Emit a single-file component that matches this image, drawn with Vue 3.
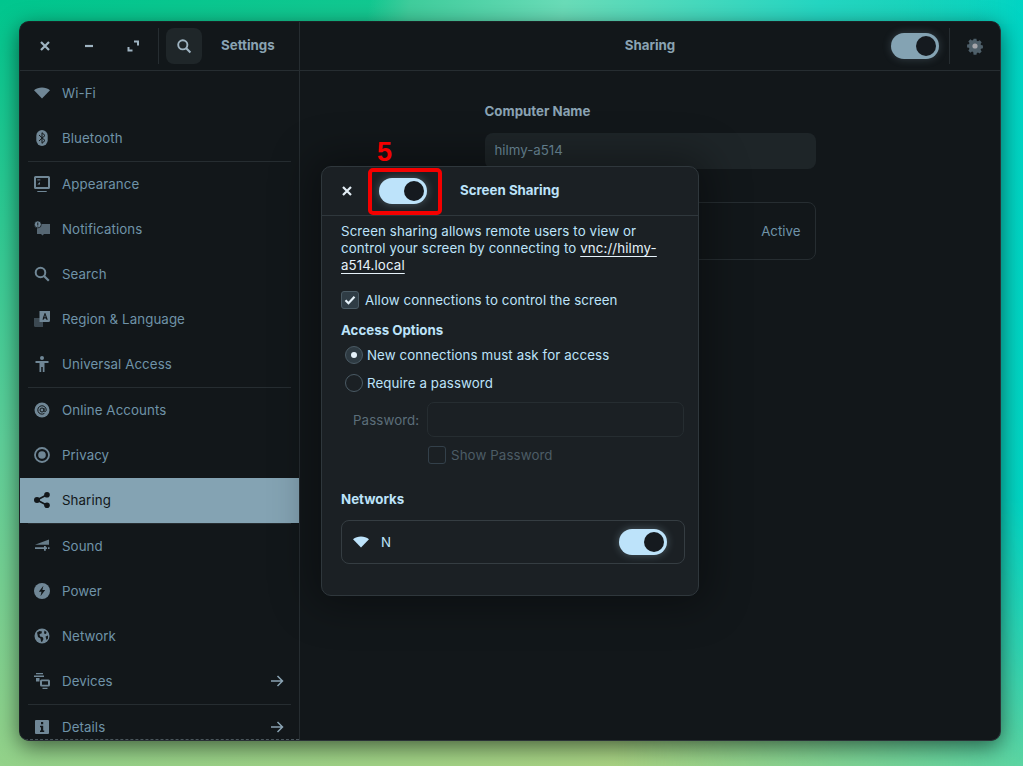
<script setup>
const groups = [
  [
    { label: 'Wi-Fi', icon: 'wifi' },
    { label: 'Bluetooth', icon: 'bluetooth' },
  ],
  [
    { label: 'Appearance', icon: 'appearance' },
    { label: 'Notifications', icon: 'notifications' },
    { label: 'Search', icon: 'search' },
    { label: 'Region & Language', icon: 'region' },
    { label: 'Universal Access', icon: 'access' },
  ],
  [
    { label: 'Online Accounts', icon: 'online' },
    { label: 'Privacy', icon: 'privacy' },
    { label: 'Sharing', icon: 'sharing', active: true },
  ],
  [
    { label: 'Sound', icon: 'sound' },
    { label: 'Power', icon: 'power' },
    { label: 'Network', icon: 'network' },
    { label: 'Devices', icon: 'devices', arrow: true },
  ],
  [{ label: 'Details', icon: 'details', arrow: true }],
]
</script>

<template>
  <div class="desktop">
    <div class="window">
      <header class="titlebar">
        <div class="title-left">
          <div class="win-buttons">
            <svg class="tb-icon" viewBox="0 0 16 16"><path d="M4 4l8 8M12 4l-8 8" stroke="currentColor" stroke-width="2.2" /></svg>
            <svg class="tb-icon" viewBox="0 0 16 16"><path d="M4 8h8" stroke="currentColor" stroke-width="2.2" /></svg>
            <svg class="tb-icon" viewBox="0 0 16 16"><path d="M9 3.5h4v4M3.5 9v3.5h4" fill="none" stroke="currentColor" stroke-width="2" /></svg>
          </div>
          <div class="vsep"></div>
          <button class="search-btn">
            <svg width="16" height="16" viewBox="0 0 16 16"><circle cx="6.8" cy="6.8" r="4.6" fill="none" stroke="currentColor" stroke-width="1.9" /><path d="M10.2 10.2L14.4 14.4" stroke="currentColor" stroke-width="2.1" /></svg>
          </button>
          <span class="app-title">Settings</span>
        </div>
        <div class="title-right">
          <span class="page-title">Sharing</span>
          <div class="title-tools">
            <div class="switch switch-muted"><span class="knob"></span></div>
            <div class="vsep"></div>
            <svg class="gear" width="18" height="18" viewBox="0 0 18 18">
              <path fill="#4e5f69" d="M7.4 1h3.2l.4 2.2 1.3.6 1.9-1.2 2.2 2.3-1.2 1.8.5 1.3 2.1.4v3.2l-2.1.4-.5 1.3 1.2 1.8-2.2 2.3-1.9-1.2-1.3.6-.4 1.9H7.4L7 15.8l-1.3-.6-1.9 1.2-2.2-2.3 1.2-1.8-.5-1.3L.2 10.6V7.4l2.1-.4.5-1.3-1.2-1.8 2.2-2.3 1.9 1.2L7 2.2z" transform="translate(0.9 0.9) scale(0.9)" />
              <circle cx="9" cy="9" r="2.6" fill="#a6a6aa" />
            </svg>
          </div>
        </div>
      </header>

      <div class="body">
        <aside class="sidebar">
          <div v-for="(group, g) in groups" :key="g" class="group">
            <div v-for="item in group" :key="item.label" class="row" :class="{ active: item.active }">
              <svg class="row-icon" width="16" height="16" viewBox="0 0 16 16" fill="currentColor">
                <path v-if="item.icon === 'wifi'" d="M0 5.2C2.2 3.4 5 2.4 8 2.4s5.800 1 8 2.800L8 13.600z" />
                <g v-else-if="item.icon === 'bluetooth'">
                  <rect x="2.300" y="0" width="11.400" height="16" rx="5.700" />
                  <path d="M5 5l6 5.500-3 2.800V2.700l3 2.800L5 11" fill="none" stroke="#121719" stroke-width="1" />
                </g>
                <g v-else-if="item.icon === 'appearance'">
                  <path fill-rule="evenodd" d="M1.500 0h13A1.500 1.500 0 0 1 16 1.500v10a1.500 1.500 0 0 1-1.500 1.500h-13A1.500 1.500 0 0 1 0 11.500v-10A1.500 1.500 0 0 1 1.500 0zM2 2v9h12V2z" />
                  <path d="M3.300 15h9.400v1.200H3.300zM3.300 8.500L6 6v2.500z" />
                  <rect x="3.300" y="3.400" width="3" height="1" />
                </g>
                <g v-else-if="item.icon === 'notifications'">
                  <path d="M3 3h13v10h-6l-1.500 1.500L7 13H3z" opacity="0.72" />
                  <circle cx="3.800" cy="3.400" r="3.500" stroke="#121719" stroke-width="0.800" />
                  <path d="M3.300 1.400h1v2.600h-1zM3.300 4.600h1v1h-1z" fill="#121719" />
                </g>
                <g v-else-if="item.icon === 'search'">
                  <circle cx="6.500" cy="6.500" r="4.800" fill="none" stroke="currentColor" stroke-width="2" />
                  <path d="M10 10l4.800 4.800" stroke="currentColor" stroke-width="2.200" />
                </g>
                <g v-else-if="item.icon === 'region'">
                  <path d="M0 7h9v9H1.500A1.500 1.500 0 0 1 0 14.500z" opacity="0.45" />
                  <path fill-rule="evenodd" d="M5.500 0H16v9.500a1.500 1.500 0 0 1-1.500 1.500H5.500zM10.700 2L8.200 8.800h1.400l.5-1.400h1.800l.5 1.400h1.400L11.300 2zM11 3.800l.6 2.400h-1.200z" />
                </g>
                <g v-else-if="item.icon === 'access'">
                  <circle cx="8" cy="2" r="2" />
                  <path d="M1.500 5h13v2H10.500v9H8.800v-5H7.200v5H5.500V7H1.500z" />
                </g>
                <g v-else-if="item.icon === 'online'">
                  <circle cx="8" cy="8" r="7.500" />
                  <circle cx="8" cy="8" r="2" fill="none" stroke="#121719" stroke-width="1" />
                  <path d="M10 6v2.800c0 1.400 2.200 1.200 2.200-.8a4.200 4.200 0 1 0-1.800 3.400" fill="none" stroke="#121719" stroke-width="1" />
                </g>
                <g v-else-if="item.icon === 'privacy'">
                  <circle cx="8" cy="8" r="7" fill="none" stroke="currentColor" stroke-width="1.800" />
                  <circle cx="8" cy="8" r="3.800" />
                </g>
                <g v-else-if="item.icon === 'sharing'">
                  <circle cx="13" cy="2.800" r="2.800" />
                  <circle cx="13" cy="13.200" r="2.800" />
                  <circle cx="3" cy="8" r="3" />
                  <path d="M3 8l10-5.200M3 8l10 5.200" stroke="currentColor" stroke-width="1.800" />
                </g>
                <g v-else-if="item.icon === 'sound'">
                  <path d="M1 6.800L15 1.500v5.300z" opacity="0.9" />
                  <path d="M1 9.300h9V8h1.800v1.300H13v1.700h-1.200v1.700H10V11H1zM14 9.300h1.500V11H14z" />
                </g>
                <g v-else-if="item.icon === 'power'">
                  <circle cx="8" cy="8" r="8" />
                  <path d="M9.400 2.800L4.800 8.800h2.700l-1 4.400 4.700-6.200H8.400z" fill="#121719" />
                </g>
                <g v-else-if="item.icon === 'network'">
                  <circle cx="8" cy="8" r="7.500" />
                  <path d="M3 4.500l2.500-1.500 2.500.5-.5 2-2 .5.500 2.500 2.500.5 1 2-1.500 3-1-.5-.5-3-2.500-1.500zM10.500 2.500l2 1.500-.5 2-2-.5zM11.500 8.500l2.500-1v3l-1.500 1.500z" fill="#121719" />
                </g>
                <g v-else-if="item.icon === 'devices'">
                  <path d="M2 0h7v1.200H2zM0 2.500h10v1.600H0zM2 5h3.500v3.500H2z" />
                  <path fill-rule="evenodd" d="M7.500 6.500h7a1.500 1.500 0 0 1 1.500 1.500v4a1.500 1.500 0 0 1-1.500 1.500h-7A1.500 1.500 0 0 1 6 12V8a1.500 1.500 0 0 1 1.500-1.500zM8 8.300v3.400h6V8.300z" />
                  <path d="M8.500 14.800h5V16h-5z" />
                </g>
                <g v-else-if="item.icon === 'details'">
                  <path fill-rule="evenodd" d="M2 1h12a1 1 0 0 1 1 1v12a1 1 0 0 1-1 1H2a1 1 0 0 1-1-1V2a1 1 0 0 1 1-1zM7 3v2.200h2.200V3zM6 6.800v1.400h1v3.300H6V13h4.200v-1.500h-1V6.800z" />
                </g>
              </svg>
              <span class="row-label">{{ item.label }}</span>
              <svg v-if="item.arrow" class="row-arrow" width="14" height="14" viewBox="0 0 14 14"><path d="M1 7h11M7.500 2l5 5-5 5" fill="none" stroke="currentColor" stroke-width="1.500" /></svg>
            </div>
          </div>
          <div class="scroll-edge"></div>
        </aside>

        <main class="content">
          <div class="form">
            <div class="form-title">Computer Name</div>
            <div class="name-entry">hilmy-a514</div>
            <div class="active-card"><span>Active</span></div>
          </div>
        </main>
      </div>

      <section class="dialog">
        <div class="step">5</div>
        <header class="dialog-head">
          <svg class="dialog-close" viewBox="0 0 16 16"><path d="M4 4l8 8M12 4l-8 8" stroke="currentColor" stroke-width="2.200" /></svg>
          <div class="marked">
            <div class="switch"><span class="knob"></span></div>
          </div>
          <span class="dialog-title">Screen Sharing</span>
        </header>
        <div class="dialog-body">
          <p class="intro">Screen sharing allows remote users to view or<br />control your screen by connecting to <a class="link">vnc://hilmy-</a><br /><a class="link">a514.local</a></p>
          <label class="check-row">
            <span class="check">
              <svg width="12" height="12" viewBox="0 0 12 12"><path d="M1.500 6.200l3 3 6-6.400" fill="none" stroke="#e6f2fa" stroke-width="2.200" /></svg>
            </span>
            Allow connections to control the screen
          </label>
          <div class="section-title access-title">Access Options</div>
          <div class="options">
            <label class="radio-row"><span class="radio on"></span>New connections must ask for access</label>
            <label class="radio-row"><span class="radio"></span>Require a password</label>
          </div>
          <div class="password-row">
            <span class="password-label">Password:</span>
            <div class="password-entry"></div>
          </div>
          <label class="show-row"><span class="check check-off"></span>Show Password</label>
          <div class="section-title net-title">Networks</div>
          <div class="net-card">
            <svg width="16" height="16" viewBox="0 0 16 16" fill="currentColor"><path d="M0 5.200C2.200 3.400 5 2.400 8 2.400s5.800 1 8 2.800L8 13.600z" /></svg>
            <span class="net-name">N</span>
            <div class="switch"><span class="knob"></span></div>
          </div>
        </div>
      </section>
    </div>
  </div>
</template>

<style>
html, body { margin: 0; height: 100%; overflow: hidden; }
</style>

<style scoped>
.desktop {
  width: 1023px;
  height: 766px;
  padding: 21px 22px 25px 19px;
  box-sizing: border-box;
  font-family: Inter, "Noto Sans", sans-serif;
  font-size: 13.3px;
  background: linear-gradient(168deg, #00c68e 0%, #5fd09a 45%, #b8d47f 100%);
  position: relative;
  overflow: hidden;
}
.desktop::before {
  content: "";
  position: absolute;
  inset: 0;
  background: linear-gradient(to right, transparent 60%, #00d4c4 100%);
  -webkit-mask-image: linear-gradient(to bottom, #000 65%, rgba(0, 0, 0, 0.5) 100%);
  mask-image: linear-gradient(to bottom, #000 65%, rgba(0, 0, 0, 0.5) 100%);
}
.desktop::after {
  content: "";
  position: absolute;
  left: 0;
  right: 0;
  top: 0;
  height: 24px;
  background: linear-gradient(100deg, transparent 36%, #40cd9c 40%, #6adcb8 55%, #24d6c2 80%, transparent 100%);
}
.window {
  position: relative;
  z-index: 1;
  height: 720px;
  box-sizing: border-box;
  display: flex;
  flex-direction: column;
  background: #12171a;
  border-radius: 10px;
  border: 1px solid #2a3236;
  border-left-color: #1b2124;
  border-top-color: #1b2124;
  box-shadow: 0 6px 22px rgba(0, 0, 0, 0.55);
  color: #6f93a8;
}
.titlebar {
  display: flex;
  height: 48px;
  flex: none;
  border-bottom: 1px solid #262d31;
}
.title-left {
  width: 280px;
  flex: none;
  display: flex;
  align-items: center;
  box-sizing: border-box;
  border-right: 1px solid #262d31;
}
.win-buttons {
  display: flex;
  gap: 28px;
  padding-left: 17px;
  color: #9fb4c2;
}
.tb-icon {
  width: 16px;
  height: 16px;
}
.vsep {
  width: 1px;
  height: 36px;
  background: #262d31;
}
.win-buttons + .vsep {
  margin-left: 17px;
}
.search-btn {
  width: 36px;
  height: 36px;
  margin-left: 7px;
  border: none;
  padding: 0;
  border-radius: 8px;
  background: #1f2629;
  color: #9fb4c2;
  display: flex;
  align-items: center;
  justify-content: center;
}
.app-title {
  margin-left: 19px;
  margin-bottom: 2px;
  font-weight: 700;
  color: #8aa3b3;
}
.title-right {
  flex: 1;
  position: relative;
  display: flex;
  align-items: center;
  justify-content: center;
}
.page-title {
  margin-bottom: 2px;
  font-weight: 700;
  color: #8aa3b3;
}
.title-tools {
  position: absolute;
  right: 0;
  top: 6px;
  display: flex;
  align-items: center;
  gap: 9px;
}
.switch-muted {
  margin-right: 1px;
}
.gear {
  margin: 0 16px 0 7px;
}
.switch {
  width: 48px;
  height: 26px;
  border-radius: 13px;
  background: #bde3fa;
  box-shadow: 0 0 8px rgba(189, 227, 250, 0.3);
  display: flex;
  align-items: center;
  justify-content: flex-end;
  padding-right: 3px;
  box-sizing: border-box;
  flex: none;
}
.switch-muted {
  background: #84a3b3;
  box-shadow: 0 0 8px rgba(132, 163, 179, 0.3);
}
.knob {
  width: 20px;
  height: 20px;
  border-radius: 50%;
  background: #151a1f;
}
.body {
  flex: 1;
  display: flex;
  min-height: 0;
}
.sidebar {
  width: 280px;
  flex: none;
  box-sizing: border-box;
  border-right: 1px solid #262d31;
  position: relative;
  overflow: hidden;
  border-bottom-left-radius: 9px;
}
.group {
  position: relative;
}
.group + .group::before {
  content: "";
  position: absolute;
  top: -1px;
  left: 8px;
  right: 8px;
  height: 1px;
  background: #262d31;
}
.group + .group {
  margin-top: 1px;
}
.row {
  height: 45px;
  box-sizing: border-box;
  padding: 0 15px 1px 14px;
  display: flex;
  align-items: center;
  color: #6f93a8;
  letter-spacing: 0.08px;
}
.row.active {
  background: #84a3b3;
  color: #12171a;
}
.row-icon {
  flex: none;
  color: #708796;
}
.active .row-icon {
  color: #12171a;
}
.row-label {
  margin-left: 12px;
  flex: 1;
}
.row-arrow {
  color: #8aa3b3;
}
.scroll-edge {
  position: absolute;
  left: 0;
  right: 0;
  bottom: 0;
  border-bottom: 1px dashed #4a565c;
}
.content {
  flex: 1;
  display: flex;
  justify-content: center;
}
.form {
  width: 331px;
  padding-top: 32px;
}
.form-title {
  font-weight: 700;
  color: #8aa3b3;
  height: 16px;
  line-height: 16px;
}
.name-entry {
  margin-top: 14px;
  height: 36px;
  line-height: 35px;
  padding-left: 10px;
  border-radius: 8px;
  background: #1e2528;
  color: #6d8b9b;
}
.active-card {
  margin-top: 33px;
  height: 58px;
  box-sizing: border-box;
  border: 1px solid #262d31;
  border-radius: 8px;
  display: flex;
  align-items: center;
  justify-content: flex-end;
  padding-right: 14px;
  color: #6f93a8;
}
.dialog {
  position: absolute;
  left: 301px;
  top: 144px;
  width: 378px;
  height: 430px;
  box-sizing: border-box;
  background: #1b2024;
  border: 1px solid #2f373c;
  border-radius: 10px;
  box-shadow: 0 0 40px 10px rgba(0, 0, 0, 0.35);
  color: #bde3fa;
}
.step {
  position: absolute;
  left: 55px;
  top: -30px;
  color: #f50000;
  font-family: "Liberation Sans", Arial, sans-serif;
  font-size: 27px;
  font-weight: 700;
  line-height: 30px;
}
.dialog-head {
  height: 48px;
  display: flex;
  align-items: center;
  border-bottom: 1px solid #2f373c;
}
.dialog-close {
  width: 16px;
  height: 16px;
  margin-left: 17px;
  color: #e3eef5;
  flex: none;
}
.marked {
  margin-left: 13px;
  width: 74px;
  height: 47px;
  box-sizing: border-box;
  border: 4px solid #f50000;
  border-radius: 5px;
  display: flex;
  align-items: center;
  padding-left: 7px;
  flex: none;
}
.dialog-title {
  margin-left: 18px;
  margin-bottom: 2px;
  font-weight: 700;
}
.dialog-body {
  padding: 7px 13px 0 19px;
}
.intro {
  margin: 0;
  line-height: 17px;
  letter-spacing: 0.12px;
}
.link {
  color: #e6f2fa;
  text-decoration: underline;
  text-underline-offset: 3px;
}
.check-row {
  display: flex;
  align-items: center;
  gap: 6px;
  margin-top: 17px;
  height: 18px;
  letter-spacing: 0.1px;
}
.check {
  width: 16px;
  height: 16px;
  flex: none;
  background: #2f3c45;
  border: 1px solid #4a5a64;
  border-radius: 3px;
  display: flex;
  align-items: center;
  justify-content: center;
}
.section-title {
  font-weight: 700;
  color: #bde3fa;
}
.access-title {
  margin-top: 13px;
  height: 16px;
  line-height: 16px;
}
.options {
  margin-top: 8px;
  padding-left: 4px;
  display: flex;
  flex-direction: column;
  gap: 10px;
}
.radio-row {
  display: flex;
  align-items: center;
  gap: 4px;
  height: 18px;
  letter-spacing: 0.1px;
}
.radio {
  width: 18px;
  height: 18px;
  box-sizing: border-box;
  border: 1.5px solid #4a5a64;
  border-radius: 50%;
  display: flex;
  align-items: center;
  justify-content: center;
}
.radio.on {
  background: #2e3a42;
}
.radio.on::after {
  content: "";
  width: 6px;
  height: 6px;
  border-radius: 50%;
  background: #e6f2fa;
}
.password-row {
  display: flex;
  align-items: center;
  margin-top: 10px;
  padding-left: 12px;
  gap: 8px;
}
.password-label {
  color: #5c6e7a;
  letter-spacing: 0.1px;
}
.password-entry {
  width: 257px;
  height: 35px;
  box-sizing: border-box;
  border: 1px solid #262d31;
  border-radius: 7px;
  background: #1b2024;
}
.show-row {
  display: flex;
  align-items: center;
  gap: 5px;
  margin: 9px 0 0 87px;
  height: 18px;
  color: #4c5c66;
  letter-spacing: 0.1px;
}
.check-off {
  background: transparent;
  border-color: #33404a;
}
.net-title {
  margin-top: 27px;
  height: 16px;
  line-height: 16px;
}
.net-card {
  margin-top: 13px;
  height: 44px;
  box-sizing: border-box;
  border: 1px solid #353d42;
  border-radius: 8px;
  display: flex;
  align-items: center;
  padding: 0 17px 0 11px;
}
.net-name {
  margin-left: 12px;
  flex: 1;
}
</style>
